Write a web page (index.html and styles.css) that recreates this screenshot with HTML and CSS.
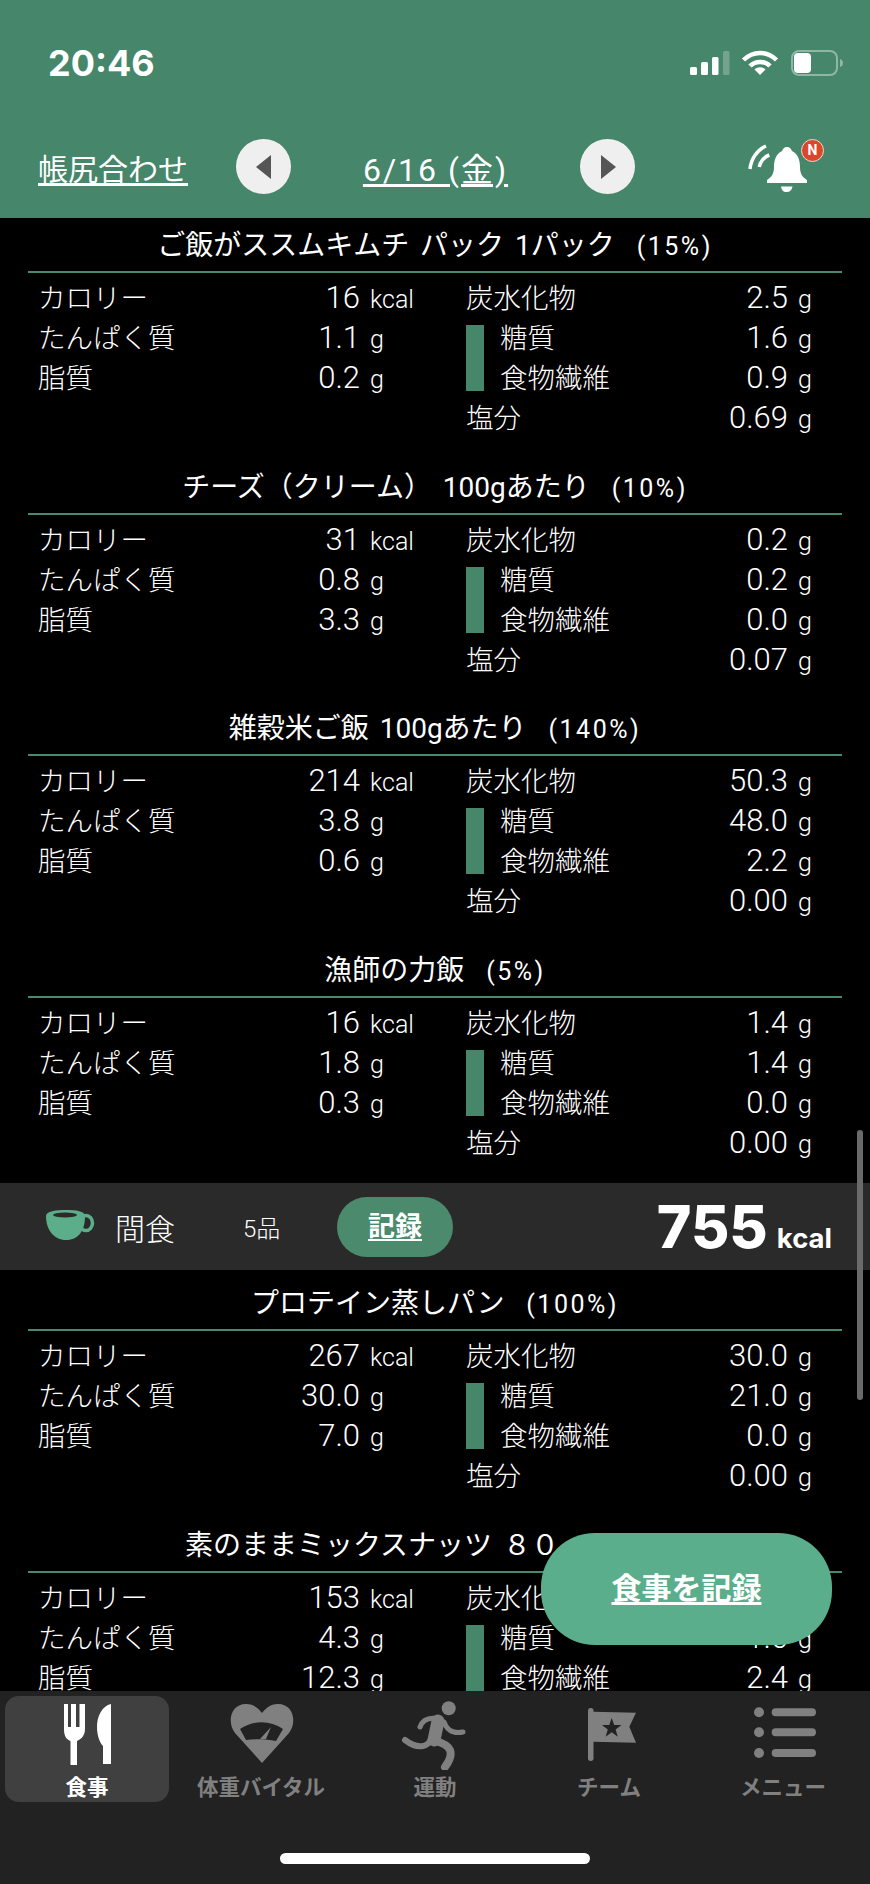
FILE: index.html
```html
<!DOCTYPE html>
<html>
<head>
    <meta name="viewport" content="width=device-width, initial-scale=1" />
    <title>食事</title>
    <link rel="stylesheet" href="styles.css">
</head>

<body>

<div class="app">
    <header class="header">
        <div class="status-bar">
            <span class="clock">20:46</span>
            <svg class="status-icons" width="155" height="28" viewBox="0 0 155 28">
                <rect x="0" y="18" width="7" height="8" rx="1.5" fill="#fff"/>
                <rect x="11" y="13" width="7" height="13" rx="1.5" fill="#fff"/>
                <rect x="22" y="8" width="6.5" height="18" rx="1.5" fill="#fff"/>
                <rect x="33" y="2" width="6.5" height="24" rx="1.5" fill="#fff" opacity="0.25"/>
                <path d="M53.5 11 C63 1.5 77 1.5 86.5 11" fill="none" stroke="#fff" stroke-width="4.5"/>
                <path d="M60 17 C65.5 11.5 74.5 11.5 80 17" fill="none" stroke="#fff" stroke-width="4.5"/>
                <path d="M64.5 20.5 C67.5 17.5 72.5 17.5 75.5 20.5 L70 26Z" fill="#fff"/>
                <rect x="102" y="2" width="45" height="24" rx="7" fill="none" stroke="#fff" stroke-width="2" opacity="0.4"/>
                <rect x="104" y="4" width="17" height="20" rx="4" fill="#fff"/>
                <path d="M150 10 C152.5 11 153 12 153 14 C153 16 152.5 17 150 18Z" fill="#fff" opacity="0.4"/>
            </svg>
        </div>
        <div class="date-bar">
            <a class="balance-link">帳尻合わせ</a>
            <span class="arrow-button">
                <svg width="20" height="26" viewBox="0 0 20 26"><path d="M17 1V25L2 13Z" fill="#555"/></svg>
            </span>
            <a class="date-link">6/16 (金)</a>
            <span class="arrow-button">
                <svg width="20" height="26" viewBox="0 0 20 26"><path d="M3 1V25L18 13Z" fill="#555"/></svg>
            </span>
            <span class="bell">
                <svg width="80" height="55" viewBox="0 0 80 55">
                    <path d="M41.7 8 C45 8 46 10 47 12 C53 15 55 21 55 28 C55 34 57 38 62 41 V44 H22 V41 C27 38 29 34 29 28 C29 21 31 15 37 12 C38 10 39 8 41.7 8Z" fill="#fff"/>
                    <path d="M36 47.5 H47.5 C47 51 45 53 41.7 53 C38 53 36.5 51 36 47.5Z" fill="#fff"/>
                    <path d="M5 30 C6 20 12 11 21 7" fill="none" stroke="#fff" stroke-width="3.5"/>
                    <path d="M14.3 28 C15 23 19 18 24.3 16" fill="none" stroke="#fff" stroke-width="3.5"/>
                </svg>
                <span class="badge">N</span>
            </span>
        </div>
    </header>

    <main class="content">
        <div class="scrolled">
            <section class="food">
                <h2 class="food-title">ご飯がススムキムチ パック 1パック  <span class="ratio">(15%)</span></h2>
                <div class="nutrients">
                    <div class="col-left">
                        <div class="row"><span class="label">カロリー</span><span class="num">16</span><span class="unit unit-kcal">kcal</span></div>
                        <div class="row"><span class="label">たんぱく質</span><span class="num">1.1</span><span class="unit">g</span></div>
                        <div class="row"><span class="label">脂質</span><span class="num">0.2</span><span class="unit">g</span></div>
                    </div>
                    <div class="col-right">
                        <div class="row"><span class="label">炭水化物</span><span class="num">2.5</span><span class="unit">g</span></div>
                        <div class="sub">
                            <span class="sub-bar"></span>
                            <div class="sub-rows">
                                <div class="row"><span class="label">糖質</span><span class="num">1.6</span><span class="unit">g</span></div>
                                <div class="row"><span class="label">食物繊維</span><span class="num">0.9</span><span class="unit">g</span></div>
                            </div>
                        </div>
                        <div class="row"><span class="label">塩分</span><span class="num">0.69</span><span class="unit">g</span></div>
                    </div>
                </div>
            </section>

            <section class="food">
                <h2 class="food-title">チーズ（クリーム） 100gあたり  <span class="ratio">(10%)</span></h2>
                <div class="nutrients">
                    <div class="col-left">
                        <div class="row"><span class="label">カロリー</span><span class="num">31</span><span class="unit unit-kcal">kcal</span></div>
                        <div class="row"><span class="label">たんぱく質</span><span class="num">0.8</span><span class="unit">g</span></div>
                        <div class="row"><span class="label">脂質</span><span class="num">3.3</span><span class="unit">g</span></div>
                    </div>
                    <div class="col-right">
                        <div class="row"><span class="label">炭水化物</span><span class="num">0.2</span><span class="unit">g</span></div>
                        <div class="sub">
                            <span class="sub-bar"></span>
                            <div class="sub-rows">
                                <div class="row"><span class="label">糖質</span><span class="num">0.2</span><span class="unit">g</span></div>
                                <div class="row"><span class="label">食物繊維</span><span class="num">0.0</span><span class="unit">g</span></div>
                            </div>
                        </div>
                        <div class="row"><span class="label">塩分</span><span class="num">0.07</span><span class="unit">g</span></div>
                    </div>
                </div>
            </section>

            <section class="food">
                <h2 class="food-title">雑穀米ご飯 100gあたり  <span class="ratio">(140%)</span></h2>
                <div class="nutrients">
                    <div class="col-left">
                        <div class="row"><span class="label">カロリー</span><span class="num">214</span><span class="unit unit-kcal">kcal</span></div>
                        <div class="row"><span class="label">たんぱく質</span><span class="num">3.8</span><span class="unit">g</span></div>
                        <div class="row"><span class="label">脂質</span><span class="num">0.6</span><span class="unit">g</span></div>
                    </div>
                    <div class="col-right">
                        <div class="row"><span class="label">炭水化物</span><span class="num">50.3</span><span class="unit">g</span></div>
                        <div class="sub">
                            <span class="sub-bar"></span>
                            <div class="sub-rows">
                                <div class="row"><span class="label">糖質</span><span class="num">48.0</span><span class="unit">g</span></div>
                                <div class="row"><span class="label">食物繊維</span><span class="num">2.2</span><span class="unit">g</span></div>
                            </div>
                        </div>
                        <div class="row"><span class="label">塩分</span><span class="num">0.00</span><span class="unit">g</span></div>
                    </div>
                </div>
            </section>

            <section class="food">
                <h2 class="food-title">漁師の力飯  <span class="ratio">(5%)</span></h2>
                <div class="nutrients">
                    <div class="col-left">
                        <div class="row"><span class="label">カロリー</span><span class="num">16</span><span class="unit unit-kcal">kcal</span></div>
                        <div class="row"><span class="label">たんぱく質</span><span class="num">1.8</span><span class="unit">g</span></div>
                        <div class="row"><span class="label">脂質</span><span class="num">0.3</span><span class="unit">g</span></div>
                    </div>
                    <div class="col-right">
                        <div class="row"><span class="label">炭水化物</span><span class="num">1.4</span><span class="unit">g</span></div>
                        <div class="sub">
                            <span class="sub-bar"></span>
                            <div class="sub-rows">
                                <div class="row"><span class="label">糖質</span><span class="num">1.4</span><span class="unit">g</span></div>
                                <div class="row"><span class="label">食物繊維</span><span class="num">0.0</span><span class="unit">g</span></div>
                            </div>
                        </div>
                        <div class="row"><span class="label">塩分</span><span class="num">0.00</span><span class="unit">g</span></div>
                    </div>
                </div>
            </section>

            <div class="meal-bar">
                <svg class="cup" width="50" height="32" viewBox="0 0 50 32">
                    <ellipse cx="40" cy="13" rx="6.5" ry="7.5" fill="none" stroke="#5cae8a" stroke-width="3.5"/>
                    <path d="M0 6 C0 1 10 0 20 0 C30 0 39 1 39 6 C39 20 33 30 20 30 C8 30 0 20 0 6Z" fill="#5cae8a"/>
                    <ellipse cx="19" cy="5" rx="12" ry="2.5" fill="#2a2a2a"/>
                </svg>
                <span class="meal-name">間食</span>
                <span class="meal-count">5品</span>
                <a class="record-button">記録</a>
                <span class="meal-total">755<span class="meal-unit">kcal</span></span>
            </div>

            <section class="food">
                <h2 class="food-title">プロテイン蒸しパン  <span class="ratio">(100%)</span></h2>
                <div class="nutrients">
                    <div class="col-left">
                        <div class="row"><span class="label">カロリー</span><span class="num">267</span><span class="unit unit-kcal">kcal</span></div>
                        <div class="row"><span class="label">たんぱく質</span><span class="num">30.0</span><span class="unit">g</span></div>
                        <div class="row"><span class="label">脂質</span><span class="num">7.0</span><span class="unit">g</span></div>
                    </div>
                    <div class="col-right">
                        <div class="row"><span class="label">炭水化物</span><span class="num">30.0</span><span class="unit">g</span></div>
                        <div class="sub">
                            <span class="sub-bar"></span>
                            <div class="sub-rows">
                                <div class="row"><span class="label">糖質</span><span class="num">21.0</span><span class="unit">g</span></div>
                                <div class="row"><span class="label">食物繊維</span><span class="num">0.0</span><span class="unit">g</span></div>
                            </div>
                        </div>
                        <div class="row"><span class="label">塩分</span><span class="num">0.00</span><span class="unit">g</span></div>
                    </div>
                </div>
            </section>

            <section class="food">
                <h2 class="food-title">素のままミックスナッツ ８０ｇ  <span class="ratio">(25%)</span></h2>
                <div class="nutrients">
                    <div class="col-left">
                        <div class="row"><span class="label">カロリー</span><span class="num">153</span><span class="unit unit-kcal">kcal</span></div>
                        <div class="row"><span class="label">たんぱく質</span><span class="num">4.3</span><span class="unit">g</span></div>
                        <div class="row"><span class="label">脂質</span><span class="num">12.3</span><span class="unit">g</span></div>
                    </div>
                    <div class="col-right">
                        <div class="row"><span class="label">炭水化物</span><span class="num">4.0</span><span class="unit">g</span></div>
                        <div class="sub">
                            <span class="sub-bar"></span>
                            <div class="sub-rows">
                                <div class="row"><span class="label">糖質</span><span class="num">1.6</span><span class="unit">g</span></div>
                                <div class="row"><span class="label">食物繊維</span><span class="num">2.4</span><span class="unit">g</span></div>
                            </div>
                        </div>
                        <div class="row"><span class="label">塩分</span><span class="num">0.00</span><span class="unit">g</span></div>
                    </div>
                </div>
            </section>
        </div>

        <span class="scroll-thumb"></span>
        <a class="record-meal">食事を記録</a>
    </main>

    <nav class="tabbar">
        <div class="tabs">
            <a class="tab tab-active">
                <svg width="70" height="70" viewBox="0 0 70 70">
                    <path d="M12 4 H16 V27 H19 V4 H24 V27 H27.5 V4 H33 V29 C33 36 29 39 25 41 V65 H18.5 V41 C14 39 12 36 12 29Z" fill="#fff"/>
                    <path d="M59 4 C50 6 45 16 45 27 C45 36 48 43 51 46 V64 H59Z" fill="#fff"/>
                </svg>
                <span class="tab-label">食事</span>
            </a>
            <a class="tab">
                <svg width="70" height="70" viewBox="0 0 70 70">
                    <path d="M36 63 L9 33 C1 23 4 4 20 4 C28 4 33 9 36 13 C39 9 44 4 52 4 C68 4 71 23 63 33Z" fill="#808080"/>
                    <path d="M20 40 L14 29 C27 20 44 20 57 29 L50 41 C40 39 30 39 20 40Z" fill="#222"/>
                    <path d="M45 27 L34 39 H40Z" fill="#808080"/>
                </svg>
                <span class="tab-label">体重バイタル</span>
            </a>
            <a class="tab">
                <svg width="70" height="70" viewBox="0 0 70 70" fill="none" stroke="#808080" stroke-linecap="round" stroke-linejoin="round">
                    <circle cx="48.7" cy="8.3" r="7" fill="#808080" stroke="none"/>
                    <path d="M39 19 C30 17 23 19 20 27" stroke-width="5"/>
                    <path d="M38 21 L34 40" stroke-width="13"/>
                    <path d="M44 22 C47 30 52 34 63 32" stroke-width="5"/>
                    <path d="M31 39 C28 47 18 50 5 40" stroke-width="6"/>
                    <path d="M36 41 C50 45 56 52 45 67" stroke-width="8"/>
                </svg>
                <span class="tab-label">運動</span>
            </a>
            <a class="tab">
                <svg width="70" height="70" viewBox="0 0 70 70">
                    <rect x="14" y="8" width="5.5" height="53" rx="2.7" fill="#808080"/>
                    <path d="M19 11.7 L62 12.7 L55.3 26.7 L62 42.7 L19 41.7Z" fill="#808080"/>
                    <path d="M37.7 18 L40.2 25 H47.5 L41.6 29.5 L43.8 36.7 L37.7 32.3 L31.6 36.7 L33.8 29.5 L27.9 25 H35.2Z" fill="#222"/>
                </svg>
                <span class="tab-label">チーム</span>
            </a>
            <a class="tab">
                <svg width="70" height="70" viewBox="0 0 70 70">
                    <circle cx="11" cy="12.3" r="5" fill="#808080"/>
                    <circle cx="11" cy="32.3" r="5" fill="#808080"/>
                    <circle cx="11" cy="53" r="5" fill="#808080"/>
                    <rect x="23.7" y="8.3" width="44.3" height="8" rx="4" fill="#808080"/>
                    <rect x="23.7" y="28.3" width="44.3" height="8" rx="4" fill="#808080"/>
                    <rect x="23.7" y="49" width="44.3" height="8" rx="4" fill="#808080"/>
                </svg>
                <span class="tab-label">メニュー</span>
            </a>
        </div>
        <span class="home-indicator"></span>
    </nav>
</div>

</body>
</html>
```
FILE: styles.css
```css
* {
    box-sizing: border-box;
}

body {
    margin: 0;
    background-color: #000000;
    color: #ffffff;
    font-family: Roboto, "Noto Sans CJK JP", sans-serif;
}

.app {
    position: relative;
    display: flex;
    flex-direction: column;
    width: 870px;
    height: 1884px;
    overflow: hidden;
}

/* header */

.header {
    flex: none;
    height: 218px;
    background-color: #46866a;
}

.status-bar {
    display: flex;
    align-items: center;
    justify-content: space-between;
    height: 126px;
    padding: 0 25px 0 48px;
}

.clock {
    font-family: Inter, sans-serif;
    font-size: 36px;
    font-weight: 700;
}

.date-bar {
    display: grid;
    grid-template-columns: 198px 55px 289px 55px 1fr;
    align-items: center;
    padding: 13px 0 0 38px;
}

.balance-link,
.date-link {
    font-size: 30px;
    text-decoration: underline;
    text-underline-offset: 3px;
}

.date-link {
    font-size: 32px;
    letter-spacing: 2px;
    text-align: center;
}

.arrow-button {
    display: flex;
    align-items: center;
    justify-content: center;
    width: 55px;
    height: 55px;
    border-radius: 50%;
    background-color: #efefef;
}

.bell {
    position: relative;
    width: 80px;
    height: 55px;
    margin-left: 110px;
}

.badge {
    position: absolute;
    top: 0;
    left: 56px;
    width: 23px;
    height: 23px;
    border: 1px solid #f3d6cf;
    border-radius: 50%;
    background-color: #d9482b;
    font-size: 14px;
    font-weight: 700;
    line-height: 21px;
    text-align: center;
}

/* list */

.content {
    position: relative;
    flex: 1;
    overflow: hidden;
}

.scrolled {
    margin-top: -4px;
}

.food {
    height: 241.5px;
    padding: 14px 28px 0;
}

.food-title {
    height: 45px;
    margin: 0;
    border-bottom: 2px solid #4a8a6c;
    font-size: 28px;
    font-weight: 400;
    line-height: 36px;
    text-align: center;
    white-space: pre;
    word-spacing: 4px;
}

.ratio {
    font-size: 25px;
    letter-spacing: 2.5px;
}

.nutrients {
    display: grid;
    grid-template-columns: 428px 1fr;
    padding: 5px 0 0 10px;
}

.col-left {
    padding-right: 46px;
}

.col-right {
    padding-right: 10px;
}

.row {
    display: flex;
    align-items: baseline;
    height: 40px;
    line-height: 40px;
}

.label {
    flex: 1;
    font-size: 27.5px;
    font-weight: 300;
}

.num {
    font-size: 31px;
    font-weight: 300;
}

.unit {
    font-size: 25px;
    font-weight: 300;
}

.col-left .unit {
    width: 60px;
    padding-left: 10px;
}

.col-left .unit-kcal {
    font-size: 25px;
}

.col-right .unit {
    width: 44px;
    padding-left: 10px;
}

.sub {
    display: flex;
}

.sub-bar {
    flex: none;
    width: 18px;
    margin: 7px 16px 7px 0;
    background-color: #46866a;
}

.sub-rows {
    flex: 1;
}

/* snack header row */

.meal-bar {
    display: flex;
    align-items: center;
    height: 87px;
    margin: 3px 0 2px;
    padding: 0 38px 0 46px;
    background-color: #2a2a2a;
}

.cup {
    margin-top: -1px;
}

.meal-name {
    width: 128px;
    margin-left: 19px;
    font-size: 30px;
    font-weight: 300;
}

.meal-count {
    width: 94px;
    font-size: 24px;
    font-weight: 300;
}

.record-button {
    width: 116px;
    height: 60px;
    border-radius: 30px;
    background-color: #4c8a6d;
    font-size: 27px;
    font-weight: 700;
    line-height: 60px;
    text-align: center;
    text-decoration: underline;
    text-underline-offset: 3px;
}

.meal-total {
    margin-left: auto;
    font-family: Inter, sans-serif;
    font-size: 59px;
    font-weight: 800;
}

.meal-unit {
    margin-left: 9px;
    font-size: 27.5px;
    font-weight: 700;
}

.scroll-thumb {
    position: absolute;
    top: 912px;
    left: 857px;
    width: 6px;
    height: 270px;
    border-radius: 3px;
    background-color: #6a6a6a;
}

.record-meal {
    position: absolute;
    top: 1315px;
    left: 541px;
    width: 291px;
    height: 112px;
    border-radius: 54px;
    background-color: #5bae8b;
    font-size: 30px;
    font-weight: 700;
    line-height: 112px;
    text-align: center;
    text-decoration: underline;
    text-underline-offset: 3px;
}

/* bottom tabs */

.tabbar {
    flex: none;
    display: flex;
    flex-direction: column;
    height: 193px;
    padding-top: 5px;
    background-color: #222222;
}

.tabs {
    display: grid;
    grid-template-columns: repeat(5, 1fr);
    height: 104px;
}

.tab {
    display: flex;
    flex-direction: column;
    align-items: center;
    margin: 0 5px;
    padding-top: 4px;
    border-radius: 14px;
    color: #808080;
}

.tab-active {
    background-color: #404040;
    color: #ffffff;
}

.tab-label {
    margin-top: 4px;
    font-size: 21.5px;
    font-weight: 700;
    line-height: 28px;
    white-space: nowrap;
}

.home-indicator {
    align-self: center;
    width: 310px;
    height: 11px;
    margin-top: 53px;
    border-radius: 6px;
    background-color: #ffffff;
}
```
